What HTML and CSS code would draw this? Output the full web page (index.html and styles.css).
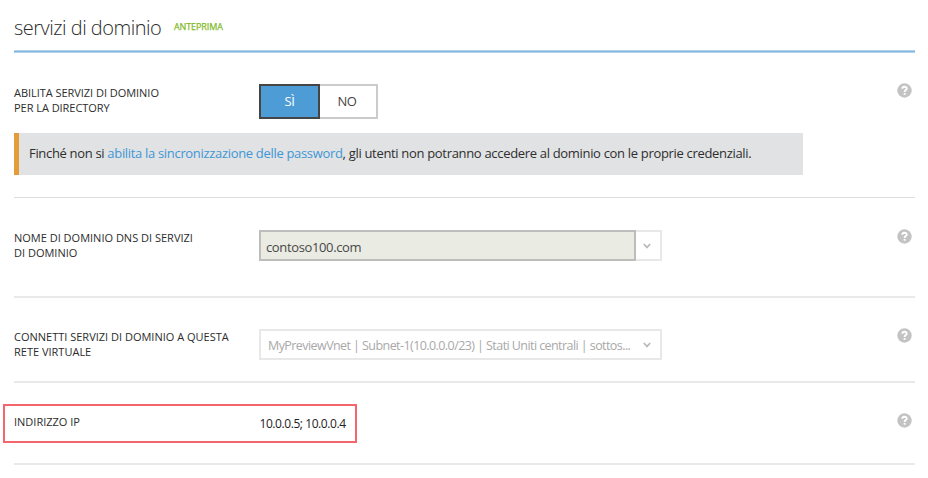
FILE: index.html
```
<!DOCTYPE html>
<html lang="it">
<head>
<meta charset="utf-8">
<title>Servizi di dominio</title>
<link rel="stylesheet" href="styles.css">
</head>
<body>
<main class="page">
  <header class="header">
    <h1 class="title">servizi di dominio</h1>
    <span class="preview">ANTEPRIMA</span>
  </header>

  <section class="section enable">
    <div class="row">
      <div class="label"><span>ABILITA SERVIZI DI DOMINIO</span><br><span>PER LA DIRECTORY</span></div>
      <div class="toggle"><button class="option selected">SÌ</button><button class="option">NO</button></div>
      <svg class="help" viewBox="0 0 15 15"><circle cx="7.5" cy="7.5" r="7.2"/><path d="M5.3 5.7C5.3 3.1 9.8 3.1 9.8 5.6C9.8 7.1 7.6 7.1 7.6 8.9M7.6 10v1.7"/></svg>
    </div>
    <p class="notice">Finché non si <a class="link">abilita la sincronizzazione delle password</a>, gli utenti non potranno accedere al dominio con le proprie credenziali.</p>
  </section>

  <section class="section dns">
    <div class="row">
      <div class="label"><span>NOME DI DOMINIO DNS DI SERVIZI</span><br><span>DI DOMINIO</span></div>
      <div class="combo">
        <div class="combo-value">contoso100.com</div>
        <div class="combo-arrow"><svg class="chevron" viewBox="0 0 8 6"><path d="M.8 1L4 4.4L7.2 1"/></svg></div>
      </div>
      <svg class="help" viewBox="0 0 15 15"><circle cx="7.5" cy="7.5" r="7.2"/><path d="M5.3 5.7C5.3 3.1 9.8 3.1 9.8 5.6C9.8 7.1 7.6 7.1 7.6 8.9M7.6 10v1.7"/></svg>
    </div>
  </section>

  <section class="section network">
    <div class="row">
      <div class="label"><span>CONNETTI SERVIZI DI DOMINIO A QUESTA</span><br><span>RETE VIRTUALE</span></div>
      <div class="select"><span class="select-text">MyPreviewVnet | Subnet-1(10.0.0.0/23) | Stati Uniti centrali | sottos...</span><svg class="chevron" viewBox="0 0 8 6"><path d="M.8 1L4 4.4L7.2 1"/></svg></div>
      <svg class="help" viewBox="0 0 15 15"><circle cx="7.5" cy="7.5" r="7.2"/><path d="M5.3 5.7C5.3 3.1 9.8 3.1 9.8 5.6C9.8 7.1 7.6 7.1 7.6 8.9M7.6 10v1.7"/></svg>
    </div>
  </section>

  <section class="section address">
    <div class="row">
      <div class="highlight">
        <div class="label"><span>INDIRIZZO IP</span></div>
        <span class="ip">10.0.0.5; 10.0.0.4</span>
      </div>
      <svg class="help" viewBox="0 0 15 15"><circle cx="7.5" cy="7.5" r="7.2"/><path d="M5.3 5.7C5.3 3.1 9.8 3.1 9.8 5.6C9.8 7.1 7.6 7.1 7.6 8.9M7.6 10v1.7"/></svg>
    </div>
  </section>
</main>
</body>
</html>
```
FILE: styles.css
```
* { box-sizing: border-box; }
body {
  margin: 0;
  background: #fff;
  color: #2c2c2c;
  font-family: "Open Sans", "Noto Sans", sans-serif;
}
.page { width: 901px; margin-left: 14px; }
.header {
  display: flex;
  height: 53px;
  background: linear-gradient(#b4d3ec 1px, #82b5df 1px 2px, #b4d3ec 2px) bottom / 100% 3px no-repeat;
}
.title {
  width: 160px;
  margin: 14px 0 0;
  color: #2c2c2c;
  font-size: 20px;
  font-weight: 300;
  line-height: 28px;
  letter-spacing: -.5px;
  white-space: nowrap;
}
.preview {
  margin-top: 20px;
  color: #7fba28;
  font-size: 9px;
  line-height: 14px;
  letter-spacing: -.1px;
  -webkit-text-stroke: .25px #7fba28;
}
.section { border-bottom: 2px solid #e9e9e9; }
.row { display: flex; align-items: flex-start; }
.label {
  width: 245.5px;
  margin-top: 1px;
  font-size: 11px;
  line-height: 15px;
  letter-spacing: 0;
}
.help { width: 15px; height: 15px; margin: 0 3px 0 auto; }
.help circle { fill: #c3c3c3; }
.help path { fill: none; stroke: #fff; stroke-width: 1.9; }

.enable { height: 145px; padding-top: 30px; border-bottom-width: 1px; border-color: #dedede; }
.enable .label { width: 245px; margin-top: 2px; letter-spacing: -.04px; }
.toggle { display: flex; margin-top: 1px; }
.option {
  width: 58px;
  height: 35px;
  padding: 0 2px 0 0;
  border: 2px solid #cbcbcb;
  border-left: 0;
  background: #fff;
  color: #444;
  font: 13px/31px "Open Sans", sans-serif;
  letter-spacing: -.4px;
}
.selected { width: 61px; padding: 0; border: 2px solid #454545; background: #4d9cd6; color: #fff; }
.notice {
  width: 789px;
  height: 42px;
  margin: 14px 0 0;
  padding-left: 10px;
  border-left: 5px solid #e49c38;
  background: #e1e2e4;
  color: #2e2e2e;
  font-size: 13px;
  line-height: 40px;
  letter-spacing: -.32px;
  white-space: nowrap;
}
.link { color: #3f97d5; }

.dns { height: 100px; padding-top: 31px; }
.dns .label, .network .label { width: 245px; }
.combo { display: flex; margin-top: 1px; width: 403px; height: 31px; }
.combo-value {
  width: 377px;
  padding: 1px 0 0 5px;
  border: 2px solid #bdbdbb;
  background: #eaebe3;
  color: #484848;
  font-size: 13px;
  line-height: 28px;
  letter-spacing: -.36px;
}
.combo-arrow {
  display: flex;
  width: 26px;
  padding-right: 2px;
  align-items: center;
  justify-content: center;
  border: 2px solid #e8e8e8;
  border-left: 0;
}
.chevron { width: 8px; height: 6px; }
.chevron path { fill: none; stroke: #b9b9b9; stroke-width: 1.7; }

.network { height: 85px; padding-top: 30px; }
.select {
  display: flex;
  width: 403px;
  height: 31px;
  margin-top: 1px;
  padding: 1px 9px 0 7px;
  align-items: center;
  justify-content: space-between;
  border: 2px solid #e8e8e8;
  color: #a9a9a9;
  font-size: 12.5px;
  letter-spacing: -.57px;
  white-space: nowrap;
}

.address { height: 82px; padding-top: 21px; }
.address .help { margin-top: 9px; }
.highlight {
  display: flex;
  width: 354px;
  height: 39px;
  margin-left: -11px;
  padding-left: 9px;
  border: 2px solid #f5656c;
}
.highlight .label { margin-top: 8px; }
.ip { margin-top: 8px; color: #222; font-size: 12px; line-height: 19px; letter-spacing: -.43px; }
```
